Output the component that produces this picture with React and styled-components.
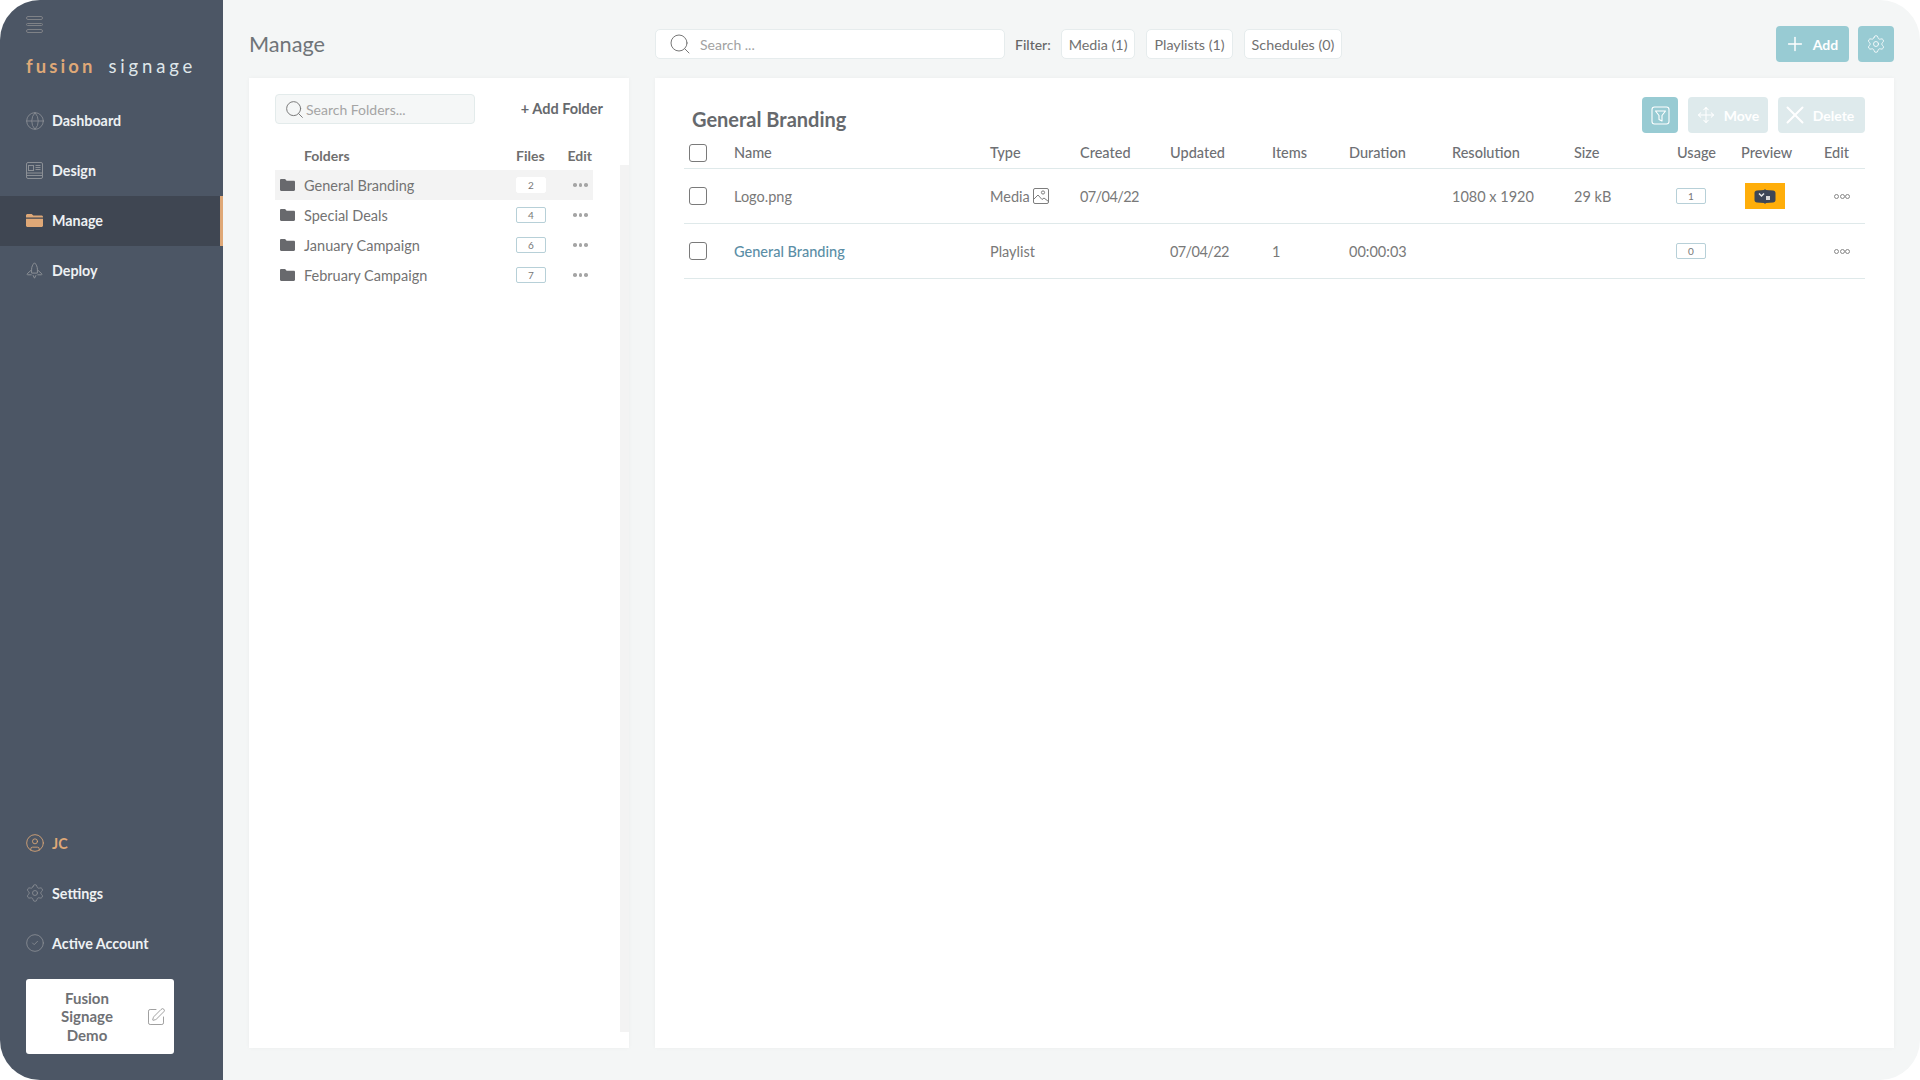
import React from "react"
import styled, { createGlobalStyle } from "styled-components"
import { Globe, CircleUser, Settings, CircleCheck, SquarePen, Search, Plus, Move, X } from "lucide-react"

const GlobalStyle = createGlobalStyle`
  html, body {
    margin: 0;
    padding: 0;
    background: #fff;
  }
  * {
    box-sizing: border-box;
  }
  body {
    font-family: "Lato", "Open Sans", sans-serif;
    color: #6e6e6e;
  }
`

const Shell = styled.div`
  width: 1920px;
  height: 1080px;
  display: flex;
  overflow: hidden;
  border-radius: 40px;
  background: #f4f6f6;
`

const Sidebar = styled.aside`
  width: 223px;
  flex-shrink: 0;
  display: flex;
  flex-direction: column;
  padding-top: 16px;
  background: #4c5665;
`

const Burger = styled.div`
  width: 17px;
  margin-left: 26px;
  display: flex;
  flex-direction: column;
  gap: 3px;
  span {
    height: 3.5px;
    border: 1px solid #7f8287;
    border-radius: 2px;
  }
`

const Logo = styled.div`
  height: 38px;
  margin: 14px 0 11px 26px;
  display: flex;
  align-items: center;
  gap: 13px;
  font-size: 18.5px;
  letter-spacing: 3.8px;
  white-space: nowrap;
  color: #dfe6ea;
  b {
    font-weight: 700;
    letter-spacing: 3.1px;
    color: #dfa877;
  }
`

const NavItem = styled.div`
  height: 50px;
  display: flex;
  align-items: center;
  gap: 9px;
  padding-left: 26px;
  font-size: 14.3px;
  font-weight: 700;
  color: ${({ $accent }) => ($accent ? "#dfa877" : "#eef1f3")};
  background: ${({ $active }) => ($active ? "#3f4652" : "transparent")};
  border-right: 3px solid ${({ $active }) => ($active ? "#dfa877" : "transparent")};
`

const IconSlot = styled.span`
  width: 17px;
  display: flex;
  justify-content: center;
  color: ${({ $on }) => ($on ? "#dfa877" : "#8b8f95")};
  svg {
    flex-shrink: 0;
  }
`

const SidebarBottom = styled.div`
  margin-top: auto;
  padding-bottom: 26px;
`

const AccountBox = styled.div`
  width: 148px;
  height: 75px;
  margin: 11px 0 0 26px;
  display: flex;
  align-items: center;
  justify-content: space-between;
  padding: 0 8px 0 16px;
  background: #fff;
  border-radius: 3px;
  font-size: 15px;
  font-weight: 700;
  line-height: 18.5px;
  color: #6f7175;
  text-align: center;
  span {
    width: 90px;
  }
  svg {
    color: #8d8d8d;
    flex-shrink: 0;
  }
`

const Main = styled.main`
  flex: 1;
  display: flex;
  flex-direction: column;
  padding: 0 26px 32px;
`

const TopBar = styled.header`
  height: 78px;
  display: flex;
  align-items: center;
  padding-top: 10px;
`

const PageTitle = styled.h1`
  width: 406px;
  margin: 0;
  font-size: 21.7px;
  font-weight: 400;
  color: #6f7478;
`

const SearchBar = styled.div`
  width: 350px;
  height: 30px;
  display: flex;
  align-items: center;
  gap: 8px;
  padding-left: 12px;
  background: #fff;
  border: 1px solid #e6eced;
  border-radius: 5px;
  font-size: 14px;
  color: #a2a2a2;
  svg {
    color: #777;
  }
`

const FilterLabel = styled.span`
  margin: 0 10px 0 10px;
  font-size: 14px;
  font-weight: 500;
  color: #666;
`

const FilterChip = styled.span`
  height: 30px;
  display: flex;
  align-items: center;
  padding: 0 7px;
  margin-right: 11px;
  background: #fff;
  border: 1px solid #e6eced;
  border-radius: 5px;
  font-size: 14.3px;
  color: #717171;
`

const ActionButton = styled.button`
  height: 36px;
  display: flex;
  align-items: center;
  justify-content: center;
  gap: ${({ $inner }) => $inner || 0}px;
  width: ${({ $width }) => $width}px;
  margin-left: ${({ $gap }) => $gap || 0}px;
  padding: 0 ${({ $nudge }) => $nudge || 0}px 0 0;
  border: 0;
  border-radius: 4px;
  background: ${({ $muted }) => ($muted ? "#deeaec" : "#98cbd3")};
  color: #fff;
  font-family: inherit;
  font-size: 14px;
  font-weight: 700;
`

const PushRight = styled.div`
  margin-left: auto;
  display: flex;
`

const Content = styled.div`
  flex: 1;
  display: flex;
  gap: 26px;
  min-height: 0;
`

const Panel = styled.section`
  background: #fff;
  box-shadow: 0 0 4px rgba(0, 0, 0, 0.04);
`

const FolderPanel = styled(Panel)`
  position: relative;
  width: 380px;
  padding: 16px 36px 0 26px;
  &::after {
    content: "";
    position: absolute;
    right: 0;
    top: 87px;
    bottom: 16px;
    width: 9px;
    background: #f3f3f3;
  }
`

const FolderTools = styled.div`
  display: flex;
  align-items: center;
  justify-content: space-between;
  margin-right: -10px;
`

const FolderSearch = styled.div`
  width: 200px;
  height: 30px;
  display: flex;
  align-items: center;
  gap: 1px;
  padding-left: 8px;
  background: #f5f7f7;
  border: 1px solid #e3ebeb;
  border-radius: 4px;
  font-size: 14px;
  color: #a5a5a5;
  svg {
    color: #777;
  }
`

const AddFolder = styled.span`
  padding-bottom: 2px;
  font-size: 14.5px;
  font-weight: 700;
  color: #66696d;
`

const folderColumns = "29px 1fr 30px 47px"

const FolderHead = styled.div`
  height: 46px;
  padding-top: 16px;
  display: grid;
  grid-template-columns: ${folderColumns};
  align-items: center;
  font-size: 14px;
  font-weight: 700;
  color: #6f6f6f;
  span:last-child {
    text-align: right;
    padding-right: 1px;
  }
`

const FolderRow = styled.div`
  height: 30px;
  display: grid;
  grid-template-columns: ${folderColumns};
  align-items: center;
  font-size: 14.5px;
  color: #737373;
  background: ${({ $active }) => ($active ? "#f3f3f3" : "transparent")};
  > svg {
    margin-left: 5px;
  }
`

const Count = styled.span`
  width: 30px;
  height: 16px;
  display: flex;
  align-items: center;
  justify-content: center;
  background: #fff;
  border: 1px solid ${({ $plain }) => ($plain ? "#fff" : "#b7d0d8")};
  border-radius: 2px;
  font-size: 10px;
  color: #777;
`

const UsageCount = styled(Count)`
  margin-left: -1px;
`

const FolderDots = styled.span`
  display: flex;
  gap: 2px;
  justify-content: center;
  padding-left: 22px;
  i {
    width: 3.5px;
    height: 3.5px;
    border-radius: 50%;
    background: #a5a5a5;
  }
`

const RowDots = styled.span`
  display: flex;
  gap: 0.5px;
  padding-left: 10px;
  i {
    width: 5px;
    height: 5px;
    border-radius: 50%;
    border: 1px solid #888;
  }
`

const FilesPanel = styled(Panel)`
  flex: 1;
  padding: 19px 29px 0 29px;
`

const FilesTop = styled.div`
  height: 36px;
  display: flex;
  align-items: center;
`

const FilesTitle = styled.h2`
  margin: 8px 0 0 8px;
  font-size: 20px;
  font-weight: 700;
  color: #66696d;
`

const tableColumns = "50px 256px 90px 90px 102px 77px 103px 122px 103px 64px 83px 41px"

const TableRow = styled.div`
  display: grid;
  grid-template-columns: ${tableColumns};
  align-items: center;
  height: ${({ $head }) => ($head ? 36 : 55)}px;
  padding-top: ${({ $head }) => ($head ? 4 : 0)}px;
  border-bottom: 1px solid #dfe9ea;
  font-size: 14.5px;
  color: ${({ $head }) => ($head ? "#6e7074" : "#797979")};
  ${({ $head }) => $head && "font-weight: 500;"}
`

const Check = styled.span`
  width: 18px;
  height: 18px;
  margin-left: 5px;
  border: 1px solid #7a7a7a;
  border-radius: 3px;
`

const TypeCell = styled.span`
  display: flex;
  align-items: center;
  gap: 3px;
  svg {
    color: #7d7d7d;
  }
`

const DateCell = styled.span`
  letter-spacing: -0.6px;
`

const PlaylistLink = styled.span`
  color: #5b8ea6;
  font-weight: 500;
`

const Thumb = styled.span`
  width: 40px;
  height: 26px;
  margin-left: 4px;
  display: flex;
  align-items: center;
  justify-content: center;
  background: #ffae0a;
`

const DesignIcon = () => (
  <svg width="17" height="17" viewBox="0 0 17 17" fill="none" stroke="currentColor" strokeWidth="1">
    <rect x="0.5" y="0.5" width="16" height="16" rx="1.5" />
    <rect x="2.5" y="3.5" width="5" height="5" />
    <path d="M9.5 3.5h5M9.5 5.5h5M9.5 7.5h5M1 11h15M1 13.5h15" />
  </svg>
)

const OpenFolderIcon = () => (
  <svg width="17" height="13" viewBox="0 0 17 13" fill="currentColor">
    <path d="M0 1.5C0 .7.7 0 1.5 0h4.2l1.6 1.6h8.2c.8 0 1.5.6 1.500 1.400v.6H0z" />
    <path d="M0 4.800h17v6.700c0 .8-.7 1.500-1.500 1.500h-14C.7 13 0 12.300 0 11.500z" />
  </svg>
)

const RocketIcon = () => (
  <svg width="17" height="17" viewBox="0 0 17 17" fill="none" stroke="currentColor" strokeWidth="1" strokeLinejoin="round">
    <path d="M8.500.8C6.500 2.600 5.600 5 5.600 7.500v3.600h5.800V7.500C11.400 5 10.500 2.600 8.500.8z" />
    <path d="M5.600 7.800 1.200 11.800c-.4.4-.1 1 .4 1h4M11.400 7.800l4.400 4c.4.4.1 1-.4 1h-4" />
    <path d="M7 13.200 8.500 16.200 10 13.200" />
  </svg>
)

const FolderIcon = () => (
  <svg width="15" height="12" viewBox="0 0 15 12" fill="#68696d">
    <path d="M0 1.200C0 .5.500 0 1.200 0h3.900l1.500 1.700h7.200c.7 0 1.200.5 1.200 1.200v7.900c0 .7-.5 1.200-1.200 1.200H1.200C.5 12 0 11.500 0 10.800z" />
  </svg>
)

const FilterIcon = () => (
  <svg width="19" height="19" viewBox="0 0 19 19" fill="none" stroke="#fff" strokeWidth="1.100">
    <rect x="1" y="1" width="17" height="17" rx="2.500" />
    <path d="M4.500 5h10L11 9.500V15l-3-1.500v-4z" strokeLinejoin="round" />
  </svg>
)

const PictureIcon = () => (
  <svg width="16" height="16" viewBox="0 0 16 16" fill="none" stroke="currentColor" strokeWidth="1">
    <rect x="0.500" y="0.500" width="15" height="15" rx="1.500" />
    <circle cx="10" cy="4.500" r="1.600" />
    <path d="M1 11l4-4 4 4.500 2-1.500 4.500 3.500" />
  </svg>
)

const LogoMark = () => (
  <svg width="22" height="15" viewBox="0 0 22 15">
    <path d="M3 1.500 10 1 11 0l1 1 7 .5c1.500.2 2.500 1 2.500 2.500v7c0 1.500-1 2.300-2.500 2.500L12 14l-1 1-1-1-7-.5C1.500 13.300.500 12.500.500 11V4C.500 2.500 1.500 1.700 3 1.500z" fill="#3d4656" />
    <path d="M5 4.500 7.500 7 10 4.500" fill="none" stroke="#e8e8e8" strokeWidth="1.500" />
    <rect x="12" y="7" width="4" height="4" fill="#d8d8d8" />
  </svg>
)

const navTop = [
  { label: "Dashboard", icon: <Globe size={20} strokeWidth={1} /> },
  { label: "Design", icon: <DesignIcon /> },
  { label: "Manage", icon: <OpenFolderIcon />, active: true },
  { label: "Deploy", icon: <RocketIcon /> },
]

const navBottom = [
  { label: "JC", icon: <CircleUser size={20} strokeWidth={1} />, accent: true },
  { label: "Settings", icon: <Settings size={20} strokeWidth={1} /> },
  { label: "Active Account", icon: <CircleCheck size={20} strokeWidth={1} /> },
]

const folders = [
  { name: "General Branding", files: 2, active: true },
  { name: "Special Deals", files: 4 },
  { name: "January Campaign", files: 6 },
  { name: "February Campaign", files: 7 },
]

const ThreeDots = ({ as: Wrap }) => (
  <Wrap>
    <i />
    <i />
    <i />
  </Wrap>
)

const SideLink = ({ item }) => (
  <NavItem $active={item.active} $accent={item.accent}>
    <IconSlot $on={item.active || item.accent}>{item.icon}</IconSlot>
    {item.label}
  </NavItem>
)

export default function App() {
  return (
    <>
      <GlobalStyle />
      <Shell>
        <Sidebar>
          <Burger>
            <span />
            <span />
            <span />
          </Burger>
          <Logo>
            <b>fusion</b>
            <span>signage</span>
          </Logo>
          {navTop.map((item) => (
            <SideLink key={item.label} item={item} />
          ))}
          <SidebarBottom>
            {navBottom.map((item) => (
              <SideLink key={item.label} item={item} />
            ))}
            <AccountBox>
              <span>Fusion Signage Demo</span>
              <SquarePen size={20} strokeWidth={1} />
            </AccountBox>
          </SidebarBottom>
        </Sidebar>
        <Main>
          <TopBar>
            <PageTitle>Manage</PageTitle>
            <SearchBar>
              <Search size={24} strokeWidth={1} />
              Search ...
            </SearchBar>
            <FilterLabel>Filter:</FilterLabel>
            <FilterChip>Media (1)</FilterChip>
            <FilterChip>Playlists (1)</FilterChip>
            <FilterChip>Schedules (0)</FilterChip>
            <PushRight>
              <ActionButton $width={73} $inner={7} $nudge={3}>
                <Plus size={22} strokeWidth={1.6} />
                Add
              </ActionButton>
              <ActionButton $width={36} $gap={9}>
                <Settings size={20} strokeWidth={1} />
              </ActionButton>
            </PushRight>
          </TopBar>
          <Content>
            <FolderPanel>
              <FolderTools>
                <FolderSearch>
                  <Search size={21} strokeWidth={1.1} />
                  Search Folders...
                </FolderSearch>
                <AddFolder>+ Add Folder</AddFolder>
              </FolderTools>
              <FolderHead>
                <span />
                <span>Folders</span>
                <span>Files</span>
                <span>Edit</span>
              </FolderHead>
              {folders.map((folder) => (
                <FolderRow key={folder.name} $active={folder.active}>
                  <FolderIcon />
                  <span>{folder.name}</span>
                  <Count $plain={folder.active}>{folder.files}</Count>
                  <ThreeDots as={FolderDots} />
                </FolderRow>
              ))}
            </FolderPanel>
            <FilesPanel>
              <FilesTop>
                <FilesTitle>General Branding</FilesTitle>
                <PushRight>
                  <ActionButton $width={36}>
                    <FilterIcon />
                  </ActionButton>
                  <ActionButton $width={80} $gap={10} $inner={9} $muted>
                    <Move size={18} strokeWidth={1.4} />
                    Move
                  </ActionButton>
                  <ActionButton $width={87} $gap={10} $inner={3} $nudge={9} $muted>
                    <X size={30} strokeWidth={1.6} />
                    Delete
                  </ActionButton>
                </PushRight>
              </FilesTop>
              <TableRow $head>
                <Check />
                <span>Name</span>
                <span>Type</span>
                <span>Created</span>
                <span>Updated</span>
                <span>Items</span>
                <span>Duration</span>
                <span>Resolution</span>
                <span>Size</span>
                <span>Usage</span>
                <span>Preview</span>
                <span>Edit</span>
              </TableRow>
              <TableRow>
                <Check />
                <span>Logo.png</span>
                <TypeCell>
                  Media
                  <PictureIcon />
                </TypeCell>
                <DateCell>07/04/22</DateCell>
                <span />
                <span />
                <span />
                <span>1080 x 1920</span>
                <span>29 kB</span>
                <UsageCount>1</UsageCount>
                <Thumb>
                  <LogoMark />
                </Thumb>
                <ThreeDots as={RowDots} />
              </TableRow>
              <TableRow>
                <Check />
                <PlaylistLink>General Branding</PlaylistLink>
                <span>Playlist</span>
                <span />
                <DateCell>07/04/22</DateCell>
                <span>1</span>
                <span>00:00:03</span>
                <span />
                <span />
                <UsageCount>0</UsageCount>
                <span />
                <ThreeDots as={RowDots} />
              </TableRow>
            </FilesPanel>
          </Content>
        </Main>
      </Shell>
    </>
  )
}
